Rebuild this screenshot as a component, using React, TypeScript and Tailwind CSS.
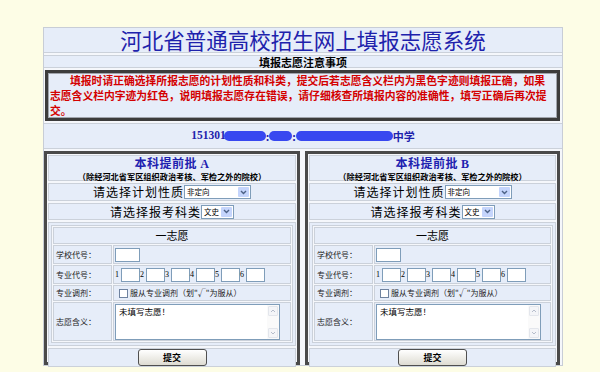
import React from 'react';

const cjk = "font-['Noto_Sans_CJK_SC','Liberation_Sans',sans-serif]";

function Select({ value, wide }: { value: string; wide: boolean }) {
  return (
    <span
      className={`inline-flex h-[14px] items-center border border-[#7f9db9] bg-white align-middle ${
        wide ? 'w-[67px]' : 'w-[33px]'
      }`}
    >
      <span className={`flex-1 pl-[2px] text-[7.5px] leading-none text-black ${cjk}`}>{value}</span>
      <span className="mr-[1px] flex h-[10px] w-[11px] items-center justify-center rounded-[1px] bg-[#c5d5fc]">
        <svg width="7" height="5" viewBox="0 0 7 5">
          <path d="M1 1l2.5 2.5L6 1" stroke="#4d6185" strokeWidth="1.4" fill="none" />
        </svg>
      </span>
    </span>
  );
}

function Box({ w }: { w: string }) {
  return <span className={`inline-block h-[14px] border border-[#7f9db9] bg-white ${w}`} />;
}

function Row({ label, h, children }: { label: string; h: string; children: React.ReactNode }) {
  return (
    <div className={`flex gap-[1px] ${h}`}>
      <div className="flex w-[59px] shrink-0 items-center border border-[#cbd1da] bg-[#e6edf9] pl-[2px] text-[8px] text-[#222]">
        {label}
      </div>
      <div className="flex flex-1 items-center border border-[#cbd1da] bg-[#e6edf9] pl-[1px]">{children}</div>
    </div>
  );
}

function Panel({ letter, w }: { letter: string; w: string }) {
  return (
    <div className={`flex h-[214px] flex-col gap-[2px] border-[3px] border-[#4a4a4a] bg-[#f5f7fb] p-[1px] ${w} ${cjk}`}>
      <div className="flex h-[26px] flex-col items-center justify-center border border-[#cbd1da] bg-[#e6edf9]">
        <div className="text-[12px] font-bold leading-[13px] tracking-[0.5px] text-[#1e22b0]">
          本科提前批 <span className="font-['Liberation_Serif',serif]">{letter}</span>
        </div>
        <div className="text-[8.2px] font-bold leading-[10px] text-black">（除经河北省军区组织政治考核、军检之外的院校）</div>
      </div>
      <div className="flex h-[18px] items-center justify-center border border-[#cbd1da] bg-[#e6edf9]">
        <span className="text-[12px] tracking-[1px] text-black">请选择计划性质</span>
        <Select value="非定向" wide={true} />
      </div>
      <div className="flex h-[17px] items-center justify-center border border-[#cbd1da] bg-[#e6edf9]">
        <span className="text-[12px] tracking-[1px] text-black">请选择报考科类</span>
        <Select value="文史" wide={false} />
      </div>
      <div className="border border-[#cbd1da] bg-[#e6edf9] p-[2px]">
        <div className="flex flex-col gap-[1px] border border-[#cbd1da] bg-[#f5f7fb] p-[1px]">
          <div className="flex h-[17px] items-center justify-center border border-[#cbd1da] bg-[#e6edf9] text-[11px] text-black">
            一志愿
          </div>
          <Row label="学校代号：" h="h-[19px]">
            <Box w="w-[25px]" />
          </Row>
          <Row label="专业代号：" h="h-[19px]">
            {[1, 2, 3, 4, 5, 6].map((n) => (
              <span key={n} className="flex items-center">
                <span className="w-[6px] font-['Liberation_Serif',serif] text-[8px] text-black">{n}</span>
                <Box w="w-[19px]" />
              </span>
            ))}
          </Row>
          <Row label="专业调剂：" h="h-[16px]">
            <span className="ml-[4px] mr-[2px] inline-block h-[9px] w-[9px] border border-[#6f83a0] bg-white" />
            <span className="text-[8px] text-[#222]">服从专业调剂（划"√"为服从）</span>
          </Row>
          <Row label="志愿含义：" h="h-[39px]">
            <div className="flex h-[36px] w-[165px] border border-[#7f9db9] bg-white">
              <div className="flex-1 pl-[3px] pt-[1px] text-[8.5px] leading-[11px] text-black">未填写志愿！</div>
              <div className="flex w-[12px] flex-col justify-between bg-[#fafafa] p-[1px]">
                <span className="flex h-[10px] items-center justify-center rounded-[1px] border border-[#e3e6ec] bg-[#f4f5f8]">
                  <svg width="6" height="4" viewBox="0 0 6 4">
                    <path d="M1 3l2-2 2 2" stroke="#b6bdcb" strokeWidth="1" fill="none" />
                  </svg>
                </span>
                <span className="flex h-[10px] items-center justify-center rounded-[1px] border border-[#e3e6ec] bg-[#f4f5f8]">
                  <svg width="6" height="4" viewBox="0 0 6 4">
                    <path d="M1 1l2 2 2-2" stroke="#b6bdcb" strokeWidth="1" fill="none" />
                  </svg>
                </span>
              </div>
            </div>
          </Row>
        </div>
      </div>
      <div className="flex flex-1 items-center justify-center border border-[#cbd1da] bg-[#e6edf9]">
        <button className="h-[17px] w-[69px] rounded-[3px] border border-[#4f4f4f] bg-gradient-to-b from-white to-[#dedcd2] text-[9px] font-bold leading-none text-black">
          提交
        </button>
      </div>
    </div>
  );
}

export default function App() {
  return (
    <div className={`h-[372px] w-[600px] overflow-hidden bg-[#fdfde6] pt-[27px] ${cjk}`}>
      <div className="ml-[43px] flex w-[520px] flex-col gap-[2px] border border-[#c8cdd6] bg-[#f5f7fb]">
        <div className="flex h-[25px] items-center justify-center border-b border-[#cbd1da] bg-[#e6edf9]">
          <span className="text-[21.5px] leading-[24px] text-[#1e22ac]">河北省普通高校招生网上填报志愿系统</span>
        </div>
        <div className="flex h-[13px] items-center justify-center border-y border-[#cbd1da] bg-[#e6edf9]">
          <span className="text-[11px] font-bold leading-[12px] text-black">填报志愿注意事项</span>
        </div>
        <div className="mx-[1px] mr-[2px] border-[3px] border-[#3c3c3c] bg-[#e6edf9] shadow-[inset_0_0_0_1px_#a0a4ac]">
          <p className="whitespace-nowrap px-[2px] text-[10.8px] font-bold leading-[15px] text-[#d40000]">
            <span className="pl-[20px]">填报时请正确选择所报志愿的计划性质和科类，提交后若志愿含义栏内为黑色字迹则填报正确，如果</span>
            <br />
            志愿含义栏内字迹为红色，说明填报志愿存在错误，请仔细核查所填报内容的准确性，填写正确后再次提
            <br />
            交。
          </p>
        </div>
        <div className="flex h-[26px] items-center justify-center border-y border-[#cbd1da] bg-[#e6edf9] text-[#1e22ac]">
          <span className="font-['Liberation_Serif',serif] text-[11.5px] font-bold">151301</span>
          <span className="-ml-[2px] inline-block h-[10px] w-[42px] rounded-full bg-[#3848f0]" />
          <span className="text-[11px] font-bold">:</span>
          <span className="inline-block h-[10px] w-[23px] rounded-full bg-[#3848f0]" />
          <span className="text-[11px] font-bold">:</span>
          <span className="inline-block h-[10px] w-[97px] rounded-full bg-[#3848f0]" />
          <span className="text-[11px] font-bold">中学</span>
        </div>
        <div className="flex gap-[5px]">
          <Panel letter="A" w="w-[256px]" />
          <Panel letter="B" w="w-[255px]" />
        </div>
      </div>
    </div>
  );
}
